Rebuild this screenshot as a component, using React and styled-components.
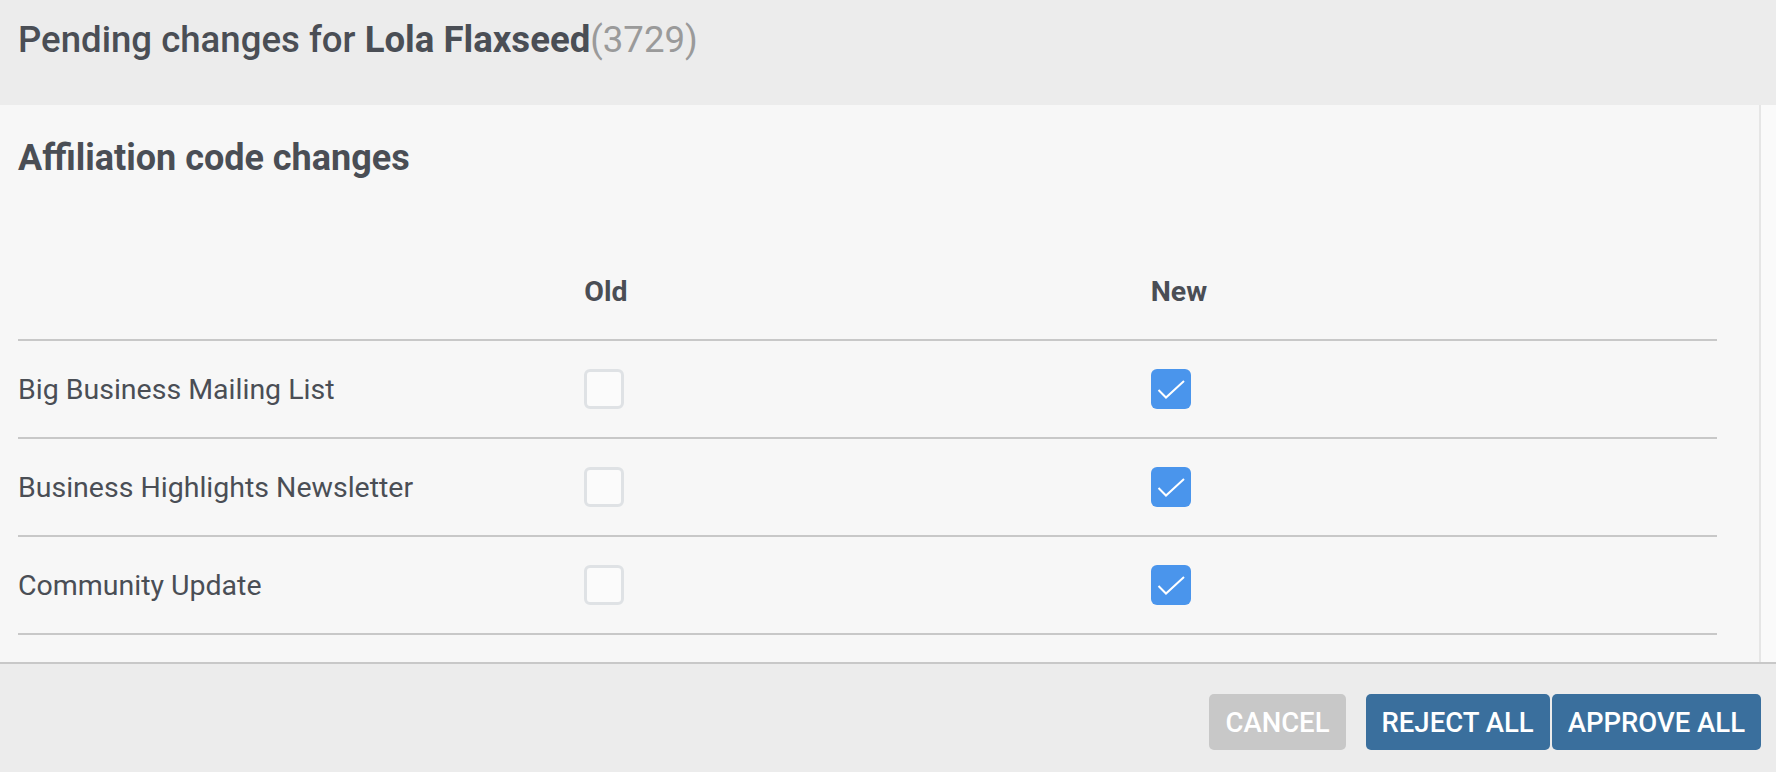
import React from "react";
import styled, { createGlobalStyle } from "styled-components";

const GlobalStyle = createGlobalStyle`
  html, body {
    margin: 0;
    padding: 0;
  }
  body {
    font-family: Roboto, "Liberation Sans", Arial, sans-serif;
    color: #4a4e55;
    background: #ececec;
  }
`;

const Page = styled.div`
  height: 772px;
  display: flex;
  flex-direction: column;
`;

const Header = styled.header`
  height: 105px;
  box-sizing: border-box;
  padding: 19px 18px 0;
  background: #ececec;
`;

const Title = styled.h1`
  margin: 0;
  font-size: 36.6px;
  line-height: 42px;
  font-weight: 500;
  color: #4a4e55;
`;

const Name = styled.strong`
  font-weight: 700;
`;

const Muted = styled.span`
  font-weight: 400;
  color: #9a9a9a;
`;

const Body = styled.main`
  flex: 1;
  display: flex;
  background: #f7f7f7;
  border-bottom: 2px solid #c8c8c8;
`;

const Content = styled.section`
  flex: 1;
  padding: 32px 42px 0 18px;
  border-right: 2px solid #e6e6e6;
`;

const Gutter = styled.div`
  width: 15px;
  background: #fafafa;
`;

const SectionTitle = styled.h2`
  margin: 0 0 64px;
  font-size: 36px;
  line-height: 42px;
  font-weight: 700;
  color: #4a4e55;
`;

const Row = styled.div`
  display: grid;
  grid-template-columns: 1fr 1fr 1fr;
  align-items: center;
  height: 96px;
  border-bottom: 2px solid #c8c8c8;
  font-size: 28.5px;
  font-weight: ${(p) => (p.$head ? 700 : 400)};
`;

const Box = styled.span`
  width: 40px;
  height: 40px;
  box-sizing: border-box;
  border-radius: 6px;
  display: flex;
  align-items: center;
  justify-content: center;
  background: ${(p) => (p.$checked ? "#4a95ec" : "#fbfbfb")};
  border: ${(p) => (p.$checked ? "none" : "3px solid #dfe2e5")};
`;

const Footer = styled.footer`
  height: 108px;
  box-sizing: border-box;
  padding: 30px 15px 0;
  display: flex;
  justify-content: flex-end;
  align-items: flex-start;
  background: #ececec;
`;

const Button = styled.button`
  height: 56px;
  padding: 0 16px;
  margin-left: ${(p) => p.$space}px;
  border: none;
  border-radius: 5px;
  font-family: Roboto, "Liberation Sans", Arial, sans-serif;
  font-size: 27.5px;
  font-weight: 500;
  color: #fff;
  background: ${(p) => (p.$muted ? "#c8c8c8" : "#3a6f9d")};
  cursor: pointer;
`;

const Check = ({ checked }) => (
  <Box $checked={checked}>
    {checked && (
      <svg width="40" height="40" viewBox="0 0 40 40">
        <path
          d="M7.5 21 L15 28.5 L33 12"
          fill="none"
          stroke="#fff"
          strokeWidth="2"
        />
      </svg>
    )}
  </Box>
);

const changes = [
  { name: "Big Business Mailing List", old: false, next: true },
  { name: "Business Highlights Newsletter", old: false, next: true },
  { name: "Community Update", old: false, next: true },
];

const App = () => (
  <>
    <GlobalStyle />
    <Page>
      <Header>
        <Title>
          Pending changes for <Name>Lola Flaxseed</Name>
          <Muted>(3729)</Muted>
        </Title>
      </Header>
      <Body>
        <Content>
          <SectionTitle>Affiliation code changes</SectionTitle>
          <Row $head>
            <span />
            <span>Old</span>
            <span>New</span>
          </Row>
          {changes.map((c) => (
            <Row key={c.name}>
              <span>{c.name}</span>
              <Check checked={c.old} />
              <Check checked={c.next} />
            </Row>
          ))}
        </Content>
        <Gutter />
      </Body>
      <Footer>
        <Button $muted $space={0}>CANCEL</Button>
        <Button $space={20}>REJECT ALL</Button>
        <Button $space={2}>APPROVE ALL</Button>
      </Footer>
    </Page>
  </>
);

export default App;
